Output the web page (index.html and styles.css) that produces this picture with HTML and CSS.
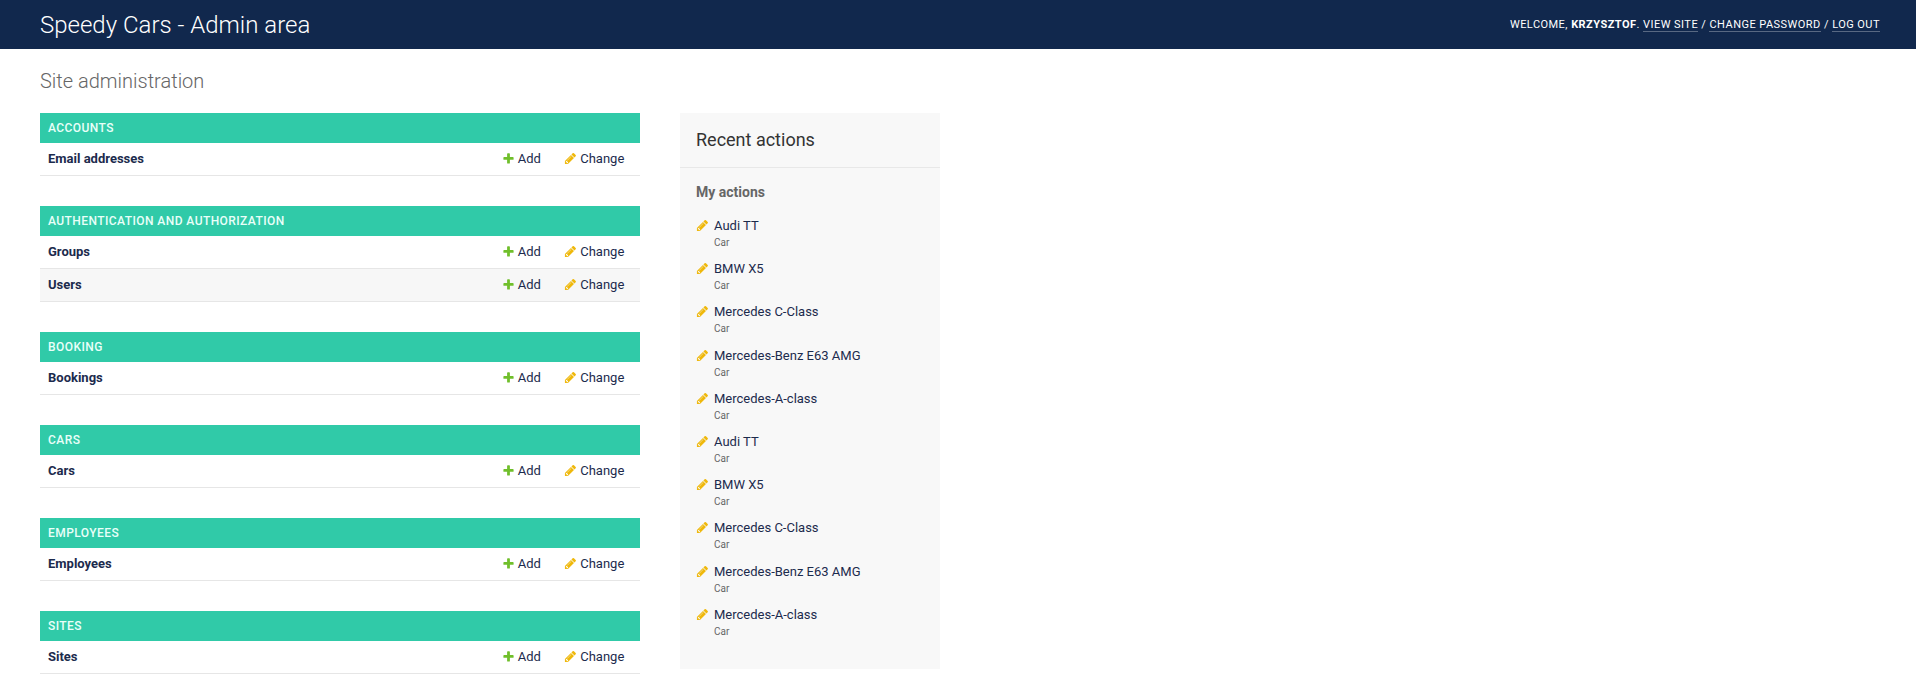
FILE: index.html
```
<!DOCTYPE html>
<html lang="en">
<head>
<meta charset="utf-8">
<title>Site administration</title>
<link rel="stylesheet" href="styles.css">
</head>
<body>
<svg class="sprite" aria-hidden="true">
<symbol id="add" viewBox="0 0 1792 1792"><path fill="#70bf2b" d="M1600 796v192q0 40-28 68t-68 28h-416v416q0 40-28 68t-68 28h-192q-40 0-68-28t-28-68v-416h-416q-40 0-68-28t-28-68v-192q0-40 28-68t68-28h416v-416q0-40 28-68t68-28h192q40 0 68 28t28 68v416h416q40 0 68 28t28 68z"/></symbol>
<symbol id="edit" viewBox="0 0 1792 1792"><path fill="#efb80b" d="M491 1536l91-91-235-235-91 91v107h128v128h107zm523-928q0-22-22-22-10 0-17 7l-542 542q-7 7-7 17 0 22 22 22 10 0 17-7l542-542q7-7 7-17zm-54-192l416 416-832 832h-416v-416zm683 96q0 53-37 90l-166 166-416-416 166-165q36-38 90-38 53 0 91 38l235 234q37 39 37 91z"/></symbol>
</svg>
<header class="header">
<div class="branding">Speedy Cars - Admin area</div>
<div class="user-tools">Welcome, <strong>Krzysztof</strong>. <a href="#">View site</a> / <a href="#">Change password</a> / <a href="#">Log out</a></div>
</header>
<main class="content">
<h1>Site administration</h1>
<div class="columns">
<div class="apps">
<section class="module"><h2>Accounts</h2>
<div class="row"><a class="model">Email addresses</a><a class="add"><svg><use href="#add"/></svg>Add</a><a class="change"><svg><use href="#edit"/></svg>Change</a></div></section>
<section class="module"><h2>Authentication and Authorization</h2>
<div class="row"><a class="model">Groups</a><a class="add"><svg><use href="#add"/></svg>Add</a><a class="change"><svg><use href="#edit"/></svg>Change</a></div>
<div class="row"><a class="model">Users</a><a class="add"><svg><use href="#add"/></svg>Add</a><a class="change"><svg><use href="#edit"/></svg>Change</a></div></section>
<section class="module"><h2>Booking</h2>
<div class="row"><a class="model">Bookings</a><a class="add"><svg><use href="#add"/></svg>Add</a><a class="change"><svg><use href="#edit"/></svg>Change</a></div></section>
<section class="module"><h2>Cars</h2>
<div class="row"><a class="model">Cars</a><a class="add"><svg><use href="#add"/></svg>Add</a><a class="change"><svg><use href="#edit"/></svg>Change</a></div></section>
<section class="module"><h2>Employees</h2>
<div class="row"><a class="model">Employees</a><a class="add"><svg><use href="#add"/></svg>Add</a><a class="change"><svg><use href="#edit"/></svg>Change</a></div></section>
<section class="module"><h2>Sites</h2>
<div class="row"><a class="model">Sites</a><a class="add"><svg><use href="#add"/></svg>Add</a><a class="change"><svg><use href="#edit"/></svg>Change</a></div></section>
</div>
<aside class="recent">
<h2>Recent actions</h2>
<h3>My actions</h3>
<ul>
<li><svg><use href="#edit"/></svg><div><a>Audi TT</a><small>Car</small></div></li>
<li><svg><use href="#edit"/></svg><div><a>BMW X5</a><small>Car</small></div></li>
<li><svg><use href="#edit"/></svg><div><a>Mercedes C-Class</a><small>Car</small></div></li>
<li><svg><use href="#edit"/></svg><div><a>Mercedes-Benz E63 AMG</a><small>Car</small></div></li>
<li><svg><use href="#edit"/></svg><div><a>Mercedes-A-class</a><small>Car</small></div></li>
<li><svg><use href="#edit"/></svg><div><a>Audi TT</a><small>Car</small></div></li>
<li><svg><use href="#edit"/></svg><div><a>BMW X5</a><small>Car</small></div></li>
<li><svg><use href="#edit"/></svg><div><a>Mercedes C-Class</a><small>Car</small></div></li>
<li><svg><use href="#edit"/></svg><div><a>Mercedes-Benz E63 AMG</a><small>Car</small></div></li>
<li><svg><use href="#edit"/></svg><div><a>Mercedes-A-class</a><small>Car</small></div></li>
</ul>
</aside>
</div>
</main>
</body>
</html>
```
FILE: styles.css
```
* { box-sizing: border-box; }
html, body { height: 675px; overflow: hidden; }
body { margin: 0; background: #fff; color: #333; font: 13px/16px Roboto, sans-serif; }
.sprite { display: none; }
h1, h2, h3, ul { margin: 0; padding: 0; }
svg { width: 13px; height: 13px; flex: none; }
.header { display: flex; justify-content: space-between; align-items: center; height: 49px; padding: 0 36px 0 40px; background: #11284d; color: #fff; }
.branding { font-size: 24px; line-height: 28px; font-weight: 300; }
.user-tools { font-size: 11px; letter-spacing: .46px; text-transform: uppercase; }
.user-tools strong { font-weight: 700; }
.user-tools a { color: #fff; text-decoration: none; border-bottom: 1px solid rgba(255, 255, 255, .3); }
.content { padding: 20px 40px 0; }
h1 { margin-bottom: 20px; color: #666; font-size: 20px; line-height: 24px; font-weight: 300; }
.columns { display: flex; align-items: flex-start; gap: 40px; }
.apps { display: flex; flex-direction: column; gap: 30px; width: 600px; }
.module h2 { height: 30px; padding: 7px 8px; background: #30caa8; color: #e9fff9; font-size: 12px; line-height: 16px; font-weight: 500; letter-spacing: .43px; text-transform: uppercase; }
.row { display: flex; height: 33px; padding: 8px; border-bottom: 1px solid #e6e6e6; color: #1c2b4d; }
.row:nth-of-type(even) { background: #f7f7f7; }
.model { flex: 1; font-weight: 700; }
.add, .change { display: flex; gap: 3px; }
.add { width: 62.4px; }
.change { width: 67.8px; }
.row svg { margin-top: 1px; }
.recent { width: 260px; height: 556px; background: #f8f8f8; }
.recent h2 { height: 55px; padding: 16px; border-bottom: 1px solid #e8e8e8; font-size: 18px; line-height: 22px; font-weight: 400; }
.recent h3 { padding: 16px 16px 0; color: #666; font-size: 14px; line-height: 16px; font-weight: 700; }
.recent ul { padding: 18px 16px 0; list-style: none; }
.recent li { display: flex; gap: 5px; height: 43.2px; color: #1c2b4d; }
.recent li svg { margin-top: 1px; }
.recent a { display: block; }
.recent small { display: block; margin-top: 1px; color: #666; font-size: 10px; }
```
